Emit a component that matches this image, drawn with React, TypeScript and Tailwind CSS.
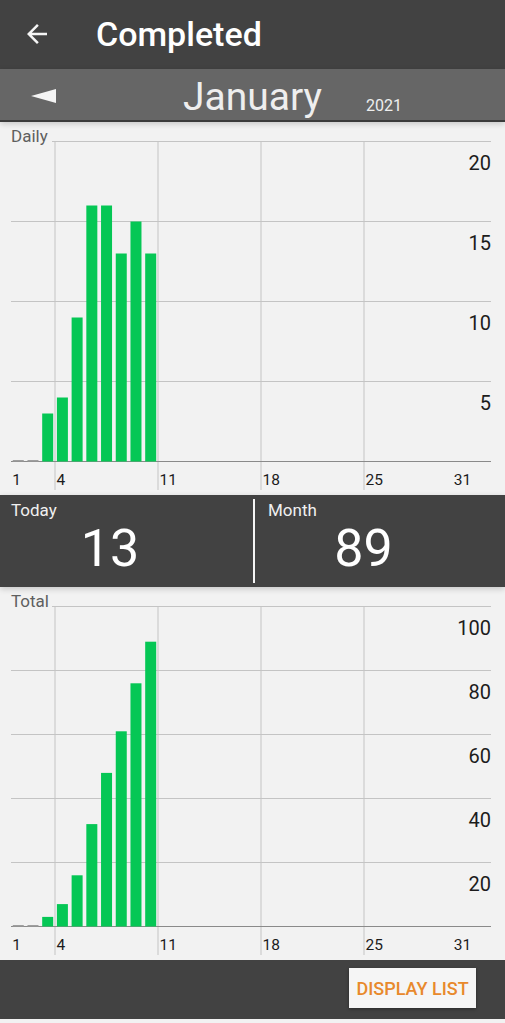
import React from 'react';

const daily = [0, 0, 3, 4, 9, 16, 16, 13, 15, 13];
const total = daily.reduce<number[]>((acc, v) => [...acc, (acc[acc.length - 1] ?? 0) + v], []);

const SLOT = 14.714;
const LEFT = 10.86;
const RIGHT = 491;
const TOP = 19.5;
const AXIS = 339.5;

const slotX = (day: number) => LEFT + (day - 1) * SLOT;

interface ChartProps {
  title: string;
  values: number[];
  max: number;
  ticks: number[];
}

function BarChart({ title, values, max, ticks }: ChartProps) {
  const scale = (AXIS - TOP) / max;
  const step = (AXIS - TOP) / ticks.length;
  const rows = ticks.map((_, i) => TOP + i * step);

  return (
    <svg width="505" height="373" className="block" style={{ fontFamily: 'Roboto, sans-serif' }}>
      {rows.map((y) => (
        <line key={y} x1={11} x2={RIGHT} y1={y} y2={y} stroke="#c4c4c4" strokeWidth="1" />
      ))}
      {[4, 11, 18, 25].map((d) => (
        <line key={d} x1={slotX(d)} x2={slotX(d)} y1={TOP} y2={368} stroke="#c4c4c4" strokeWidth="1" />
      ))}
      <line x1={11} x2={RIGHT} y1={AXIS} y2={AXIS} stroke="#8a8a8a" strokeWidth="1" />

      {values.map((v, i) => {
        const x = slotX(i + 1) + 1.9;
        if (v === 0) {
          return <rect key={i} x={x} y={AXIS - 1.5} width={11} height={1.5} fill="#9e9e9e" />;
        }
        const h = v * scale;
        return <rect key={i} x={x} y={AXIS - h} width={11} height={h} fill="#05c755" />;
      })}

      {ticks.map((t, i) => (
        <text key={t} x={RIGHT} y={rows[i] + 28} textAnchor="end" fontSize="20" fill="#1c1c1c">
          {t}
        </text>
      ))}

      {[1, 4, 11, 18, 25, 31].map((d) => (
        <text key={d} x={slotX(d) + 1.5} y={363} fontSize="15.5" fill="#1c1c1c">
          {d}
        </text>
      ))}

      <rect x={0} y={0} width={title.length * 8 + 12} height={21} fill="#f2f2f2" />
      <text x={11} y={20} fontSize="17" fill="#5f5f5f">
        {title}
      </text>
    </svg>
  );
}

export default function App() {
  return (
    <div className="w-[505px] h-[1023px] bg-[#f2f2f2] flex flex-col overflow-hidden" style={{ fontFamily: 'Roboto, "Noto Sans", sans-serif' }}>
      <header className="h-[69px] bg-[#424242] flex items-center shrink-0">
        <svg width="30" height="30" viewBox="0 0 24 24" className="ml-[22px] mt-[-2px]" fill="#f5f5f5">
          <path d="M20 11H7.83l5.59-5.59L12 4l-8 8 8 8 1.41-1.41L7.83 13H20v-2z" />
        </svg>
        <h1 className="ml-[44px] text-[34px] font-medium text-white">Completed</h1>
      </header>

      <div className="relative z-10 h-[53px] bg-[#666666] border-b-2 border-[#3a3a3a] grid grid-cols-[1fr_auto_1fr] items-center shrink-0 shadow-[0_2px_6px_rgba(0,0,0,0.18)]">
        <div className="pl-[31px] pt-[3px]">
          <svg width="26" height="14" viewBox="0 0 26 14">
            <polygon points="0,7 25,0 25,14" fill="#f4f4f4" />
          </svg>
        </div>
        <div className="text-[39px] leading-none text-[#eeeeee] pt-[6px]">January</div>
        <div className="pl-[44px] pt-[22px] text-[16px] text-[#eeeeee]">2021</div>
      </div>

      <section className="h-[373px] shrink-0">
        <BarChart title="Daily" values={daily} max={20} ticks={[20, 15, 10, 5]} />
      </section>

      <div className="relative z-10 h-[92px] bg-[#424242] flex shrink-0 shadow-[0_2px_6px_rgba(0,0,0,0.18)]">
        <div className="w-[253px] flex flex-col pl-[11px] pt-[4px]">
          <span className="text-[17px] text-[#f0f0f0] leading-[22px]">Today</span>
          <span className="text-[52px] text-white leading-none pr-[44px] text-center mt-[2px]">13</span>
        </div>
        <div className="w-[2px] bg-[#f5f5f5] my-[4px]" />
        <div className="flex-1 flex flex-col pl-[13px] pt-[4px]">
          <span className="text-[17px] text-[#f0f0f0] leading-[22px]">Month</span>
          <span className="text-[52px] text-white leading-none pr-[46px] text-center mt-[2px]">89</span>
        </div>
      </div>

      <section className="h-[373px] shrink-0">
        <BarChart title="Total" values={total} max={100} ticks={[100, 80, 60, 40, 20]} />
      </section>

      <footer className="h-[59px] bg-[#424242] flex justify-end items-start shrink-0">
        <button className="mt-[8px] mr-[29px] w-[127px] h-[40px] bg-[#f5f5f5] text-[#e8892c] text-[18px] font-medium shadow-[0_1px_3px_rgba(0,0,0,0.4)]">
          DISPLAY LIST
        </button>
      </footer>
    </div>
  );
}
